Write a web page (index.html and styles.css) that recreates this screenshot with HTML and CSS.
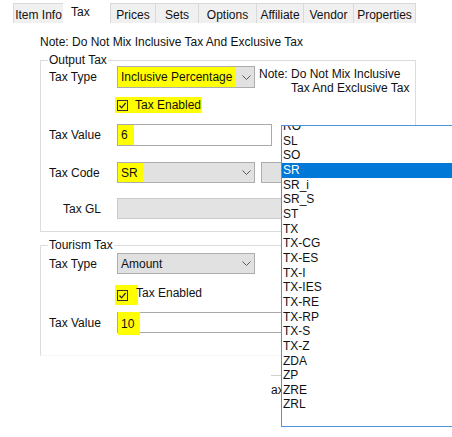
FILE: index.html
```html
<!DOCTYPE html>
<html>
<head>
<meta charset="utf-8">
<link rel="stylesheet" href="styles.css">
</head>
<body>
<div class="tabs">
  <div class="tab w-item">Item Info</div>
  <div class="tab active w-tax">Tax</div>
  <div class="tab w-prices">Prices</div>
  <div class="tab w-sets">Sets</div>
  <div class="tab w-options">Options</div>
  <div class="tab w-aff">Affiliate</div>
  <div class="tab w-vendor">Vendor</div>
  <div class="tab w-props">Properties</div>
</div>

<div class="note">Note: Do Not Mix Inclusive Tax And Exclusive Tax</div>

<fieldset class="group output">
  <legend>Output Tax</legend>
  <div class="row r1">
    <span class="lbl tall">Tax Type</span>
    <div class="select h22">
      <span class="val hl pad-sel">Inclusive Percentage</span>
      <svg class="chev" width="9" height="5" viewBox="0 0 9 5"><path d="M0.5 0.5 L4.5 4.5 L8.5 0.5" fill="none" stroke="#5a5a5a" stroke-width="1"/></svg>
    </div>
    <div class="side-note">
      <div>Note: Do Not Mix Inclusive</div>
      <div class="indent">Tax And Exclusive Tax</div>
    </div>
  </div>
  <div class="row r2">
    <label class="check hl">
      <span class="box"><svg width="9" height="9" viewBox="0 0 9 9"><path d="M1.5 4.5 L3.6 6.8 L7.6 2" fill="none" stroke="#222" stroke-width="1.2"/></svg></span>
      <span>Tax Enabled</span>
    </label>
  </div>
  <div class="row r3">
    <span class="lbl">Tax Value</span>
    <div class="input w155 h22"><span class="hl in-val">6</span></div>
  </div>
  <div class="row r4">
    <span class="lbl">Tax Code</span>
    <div class="select h21">
      <span class="val hl pad-sr">SR</span>
      <svg class="chev" width="9" height="5" viewBox="0 0 9 5"><path d="M0.5 0.5 L4.5 4.5 L8.5 0.5" fill="none" stroke="#5a5a5a" stroke-width="1"/></svg>
    </div>
    <div class="btn-box"></div>
  </div>
  <div class="row r5">
    <span class="lbl gl">Tax GL</span>
    <div class="input disabled w170 h21"></div>
  </div>
</fieldset>

<fieldset class="group tourism">
  <legend>Tourism Tax</legend>
  <div class="row t1">
    <span class="lbl">Tax Type</span>
    <div class="select h21">
      <span class="val plain">Amount</span>
      <svg class="chev" width="9" height="5" viewBox="0 0 9 5"><path d="M0.5 0.5 L4.5 4.5 L8.5 0.5" fill="none" stroke="#5a5a5a" stroke-width="1"/></svg>
    </div>
  </div>
  <div class="row t2">
    <label class="check2">
      <span class="hl box-wrap"><span class="box"><svg width="9" height="9" viewBox="0 0 9 9"><path d="M1.5 4.5 L3.6 6.8 L7.6 2" fill="none" stroke="#222" stroke-width="1.2"/></svg></span></span>
      <span class="check2-text">Tax Enabled</span>
    </label>
  </div>
  <div class="row t3">
    <span class="lbl">Tax Value</span>
    <div class="input w170 h21"><span class="hl in-val2">10</span></div>
  </div>
</fieldset>

<div class="behind">ax</div>

<div class="dropdown">
  <div class="list">
    <div class="item">RO</div>
    <div class="item">SL</div>
    <div class="item">SO</div>
    <div class="item selected">SR</div>
    <div class="item">SR_i</div>
    <div class="item">SR_S</div>
    <div class="item">ST</div>
    <div class="item">TX</div>
    <div class="item">TX-CG</div>
    <div class="item">TX-ES</div>
    <div class="item">TX-I</div>
    <div class="item">TX-IES</div>
    <div class="item">TX-RE</div>
    <div class="item">TX-RP</div>
    <div class="item">TX-S</div>
    <div class="item">TX-Z</div>
    <div class="item">ZDA</div>
    <div class="item">ZP</div>
    <div class="item">ZRE</div>
    <div class="item">ZRL</div>
  </div>
</div>
</body>
</html>
```

FILE: styles.css
```css
* { box-sizing: border-box; }
html, body { margin: 0; padding: 0; }
body {
  width: 452px;
  height: 437px;
  overflow: hidden;
  position: relative;
  background: #fff;
  font-family: "Liberation Sans", Arial, sans-serif;
  font-size: 12px;
  line-height: 14px;
  color: #111;
}

/* Tabs */
.tabs {
  display: flex;
  align-items: flex-end;
  height: 23px;
  padding-left: 13px;
}
.tab {
  height: 20px;
  line-height: 22px;
  background: #f0f0f0;
  border: 1px solid #d9d9d9;
  border-bottom: none;
  border-right: none;
  text-align: center;
  white-space: nowrap;
  overflow: hidden;
}
.tab:last-child { border-right: 1px solid #d9d9d9; }
.tab.active {
  height: 23px;
  line-height: 24px;
  background: #fff;
  border: none;
  text-align: left;
  padding-left: 8px;
}
.w-item { width: 50px; }
.w-tax { width: 47px; }
.w-prices { width: 45px; }
.w-sets { width: 43px; }
.w-options { width: 58px; }
.w-aff { width: 47px; }
.w-vendor { width: 50px; }
.w-props { width: 63px; }

.note {
  margin: 12px 0 0 40px;
  white-space: nowrap;
}

/* Group boxes */
.group {
  margin: 0 0 0 40px;
  width: 376px;
  min-width: 0;
  border: 1px solid #dcdcdc;
  padding: 0 0 12px 8px;
}
.group legend {
  padding: 0 1px;
  margin-left: -1px;
  line-height: 14px;
}
.output { margin-top: 4px; }
.tourism {
  margin-top: 6px;
  padding-bottom: 22px;
  border-bottom-color: #f7f7f7;
}

.row {
  display: flex;
  align-items: center;
}
.lbl {
  width: 68px;
  flex: none;
  white-space: nowrap;
}
.lbl.gl { padding-left: 14px; }

.hl { background: #ffff00; }

.select {
  width: 138px;
  flex: none;
  display: flex;
  align-items: center;
  background: #e1e1e1;
  border: 1px solid #adadad;
  white-space: nowrap;
}
.select .val {
  align-self: stretch;
  display: flex;
  align-items: center;
}
.pad-sel { padding: 0 3px; }
.pad-sr { padding: 0 6px 0 3px; }
.plain { padding: 0 3px; }
.chev { margin-left: auto; margin-right: 3px; flex: none; }

.h22 { height: 22px; }
.h21 { height: 21px; }
.w155 { width: 155px; }
.w170 { width: 170px; }

.input {
  flex: none;
  display: flex;
  align-items: stretch;
  background: #fff;
  border: 1px solid #a9a9a9;
}
.input.disabled {
  background: #e3e3e3;
  border-color: #cbcbcb;
}
.in-val {
  display: flex;
  align-items: center;
  padding: 0 6px 0 3px;
}
.in-val2 {
  display: flex;
  align-items: center;
  padding: 0 6px 0 3px;
  height: 23px;
  margin-top: -1px;
}

.side-note {
  margin-left: 4px;
  margin-top: 1px;
  white-space: nowrap;
  align-self: flex-start;
}
.side-note .indent { padding-left: 32px; }

.r1 { margin-top: -1px; align-items: flex-start; }
.r1 .lbl { line-height: 22px; }
.r2 { margin-top: 2px; }
.r3 { margin-top: 11px; }
.r4 { margin-top: 16px; }
.r5 { margin-top: 15px; }

.check {
  margin-left: 66px;
  height: 16px;
  display: flex;
  align-items: center;
  padding: 0 1px 0 2px;
  white-space: nowrap;
}
.box {
  width: 11px;
  height: 11px;
  border: 1px solid #333;
  display: flex;
  align-items: center;
  justify-content: center;
  margin-right: 7px;
  flex: none;
}
.box svg { display: block; }

.btn-box {
  margin-left: 6px;
  width: 40px;
  height: 21px;
  flex: none;
  background: #e1e1e1;
  border: 1px solid #adadad;
}

/* Tourism rows */
.t1 { margin-top: 1px; }
.t2 { margin-top: 11px; }
.t3 { margin-top: 7px; }
.check2 {
  margin-left: 66px;
  display: flex;
  align-items: center;
  white-space: nowrap;
}
.box-wrap {
  display: flex;
  align-items: center;
  height: 20px;
  padding: 0 10px 0 2px;
}
.box-wrap .box { margin-right: 0; }
.check2-text {
  margin-left: -2px;
  padding-bottom: 4px;
}

.behind {
  margin: 19px 0 0 271px;
  width: 120px;
  border-top: 1px solid #cfcfcf;
  padding-top: 7px;
  white-space: nowrap;
}

/* Dropdown popup */
.dropdown {
  position: absolute;
  left: 281px;
  top: 125px;
  width: 190px;
  height: 302px;
  background: #fff;
  border: 1px solid #4a95dc;
  overflow: hidden;
}
.list { margin-top: -7px; }
.item {
  height: 14.67px;
  line-height: 14.67px;
  padding-left: 1px;
  white-space: nowrap;
  color: #111;
}
.item.selected {
  background: #0078d7;
  color: #fff;
}
```
